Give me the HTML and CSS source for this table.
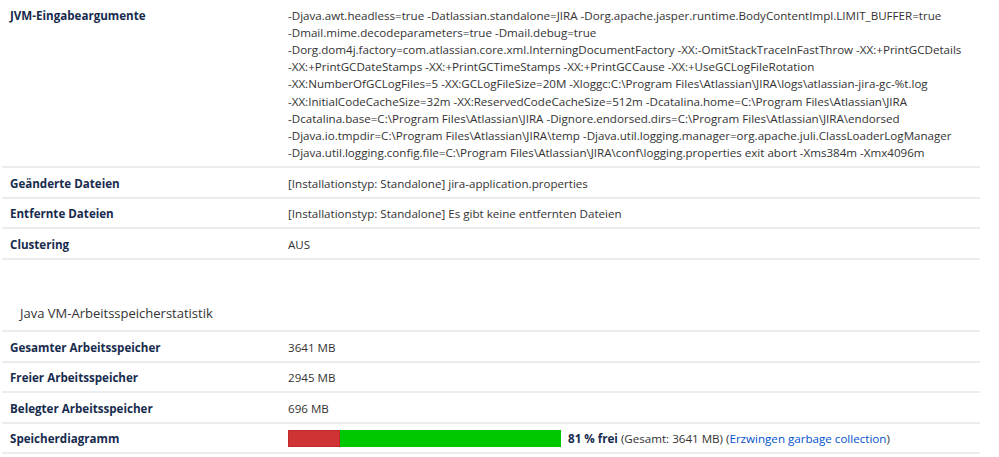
FILE: index.html
```html
<!DOCTYPE html>
<html lang="de">
<head>
<meta charset="utf-8">
<link rel="stylesheet" href="styles.css">
</head>
<body>
<table class="props">
  <colgroup><col class="label-col"><col></colgroup>
  <tr>
    <th>JVM-Eingabeargumente</th>
    <td class="multi">-Djava.awt.headless=true -Datlassian.standalone=JIRA -Dorg.apache.jasper.runtime.BodyContentImpl.LIMIT_BUFFER=true<br>-Dmail.mime.decodeparameters=true -Dmail.debug=true<br>-Dorg.dom4j.factory=com.atlassian.core.xml.InterningDocumentFactory -XX:-OmitStackTraceInFastThrow -XX:+PrintGCDetails<br>-XX:+PrintGCDateStamps -XX:+PrintGCTimeStamps -XX:+PrintGCCause -XX:+UseGCLogFileRotation<br>-XX:NumberOfGCLogFiles=5 -XX:GCLogFileSize=20M -Xloggc:C:\Program Files\Atlassian\JIRA\logs\atlassian-jira-gc-%t.log<br>-XX:InitialCodeCacheSize=32m -XX:ReservedCodeCacheSize=512m -Dcatalina.home=C:\Program Files\Atlassian\JIRA<br>-Dcatalina.base=C:\Program Files\Atlassian\JIRA -Dignore.endorsed.dirs=C:\Program Files\Atlassian\JIRA\endorsed<br>-Djava.io.tmpdir=C:\Program Files\Atlassian\JIRA\temp -Djava.util.logging.manager=org.apache.juli.ClassLoaderLogManager<br>-Djava.util.logging.config.file=C:\Program Files\Atlassian\JIRA\conf\logging.properties exit abort -Xms384m -Xmx4096m</td>
  </tr>
  <tr>
    <th>Geänderte Dateien</th>
    <td>[Installationstyp: Standalone] jira-application.properties</td>
  </tr>
  <tr>
    <th>Entfernte Dateien</th>
    <td>[Installationstyp: Standalone] Es gibt keine entfernten Dateien</td>
  </tr>
  <tr>
    <th>Clustering</th>
    <td>AUS</td>
  </tr>
</table>

<h2 class="section-title">Java VM-Arbeitsspeicherstatistik</h2>

<table class="props">
  <colgroup><col class="label-col"><col></colgroup>
  <tr>
    <th>Gesamter Arbeitsspeicher</th>
    <td>3641 MB</td>
  </tr>
  <tr>
    <th>Freier Arbeitsspeicher</th>
    <td>2945 MB</td>
  </tr>
  <tr>
    <th>Belegter Arbeitsspeicher</th>
    <td>696 MB</td>
  </tr>
  <tr>
    <th>Speicherdiagramm</th>
    <td>
      <div class="chart-row">
        <div class="bar"><div class="used" style="width:19%"></div><div class="free"></div></div>
        <span class="chart-text"><b>81 % frei</b> (Gesamt: 3641 MB) (<a href="#">Erzwingen garbage collection</a>)</span>
      </div>
    </td>
  </tr>
</table>
</body>
</html>
```

FILE: styles.css
```css
html, body {
  margin: 0;
  padding: 0;
  background: #fff;
}
body {
  font-family: "Open Sans", "Noto Sans", sans-serif;
  font-size: 11.6px;
  color: #172b4d;
  padding-left: 2px;
}
.props {
  border-collapse: collapse;
  table-layout: fixed;
  width: 978px;
}
.label-col {
  width: 278px;
}
.props th,
.props td {
  border-bottom: 2px solid #ebecf0;
  padding: 6.5px 8px 4.9px 8px;
  line-height: 17.2px;
  vertical-align: top;
  text-align: left;
}
.props th {
  font-weight: 700;
  color: #172b4d;
}
.props td {
  color: #333;
  white-space: nowrap;
}
.section-title {
  margin: 43px 0 0 0;
  padding: 0 0 7px 18px;
  font-size: 13px;
  font-weight: 400;
  line-height: 20px;
  color: #333;
  border-bottom: 2px solid #ebecf0;
  width: 960px;
}
.chart-row {
  display: flex;
  align-items: center;
  gap: 7px;
}
.bar {
  display: flex;
  width: 273px;
  height: 17px;
}
.used {
  background: #d03333;
  border: 1px solid #c02a2a;
  box-sizing: border-box;
}
.free {
  flex: 1;
  background: #00c800;
}
.chart-text b {
  color: #172b4d;
}
a {
  color: #0052cc;
  text-decoration: none;
}
```
